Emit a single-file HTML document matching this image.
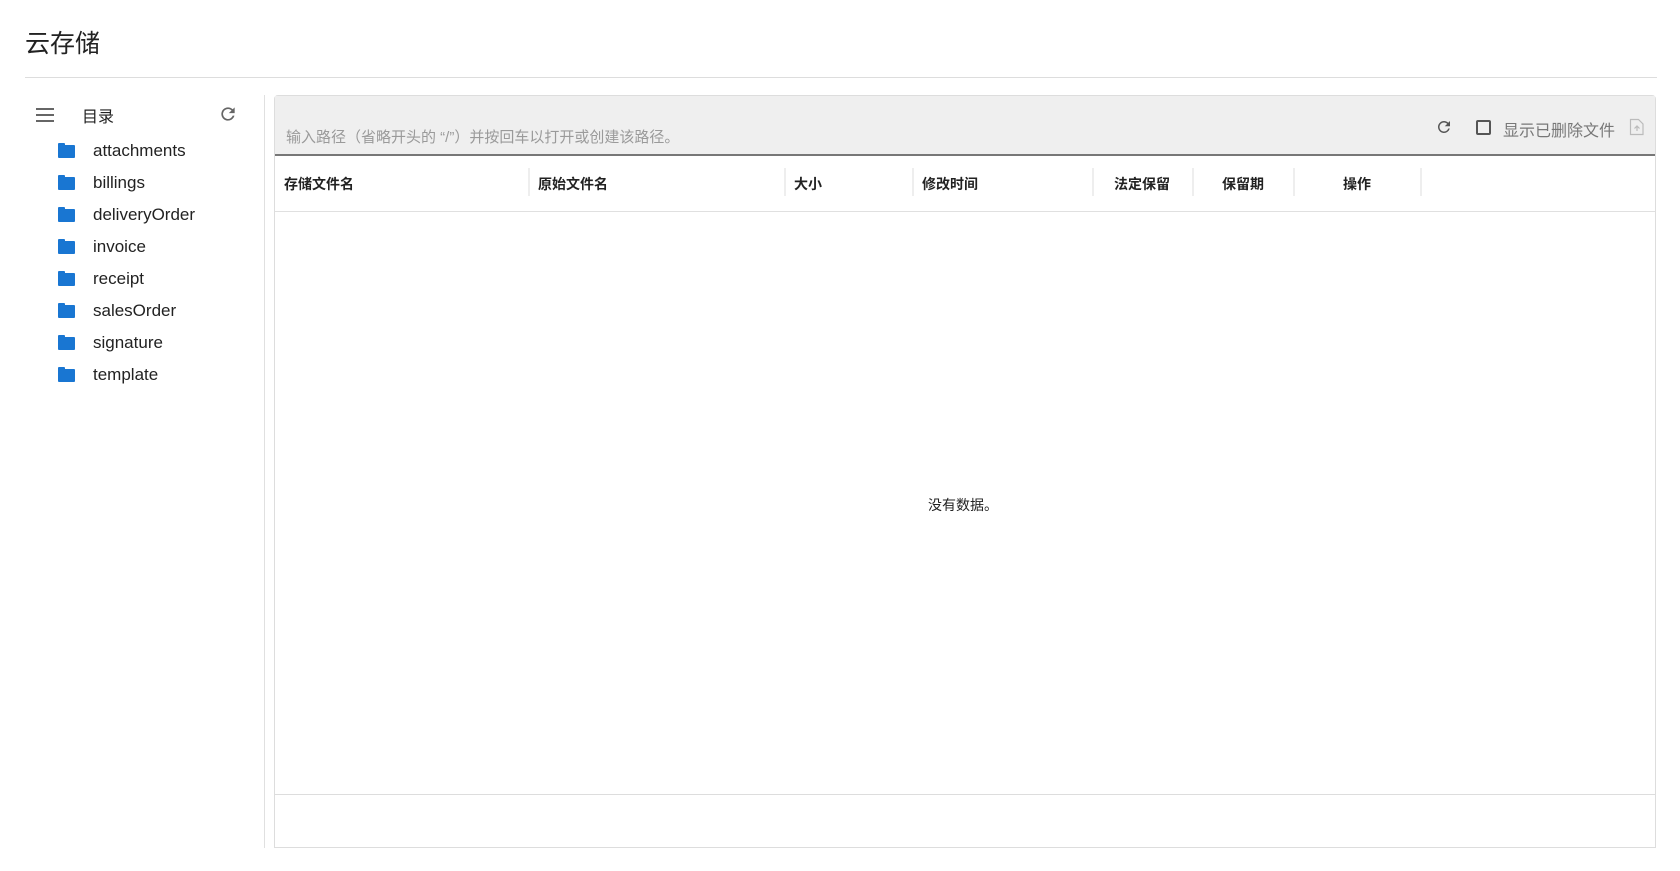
<!DOCTYPE html>
<html><head><meta charset="utf-8"><style>
*{box-sizing:border-box;margin:0;padding:0}
body{width:1680px;height:871px;background:#fff;font-family:"Liberation Sans","Noto Sans CJK SC",sans-serif;color:#222;position:relative;overflow:hidden}
.abs{position:absolute}
.title{left:25px;top:24px;font-size:25px;color:#222}
.hr{left:25px;top:77px;width:1632px;height:1px;background:#ddd}
.vd{left:264px;top:95px;width:1px;height:753px;background:#e0e0e0}
.ham{left:36px;top:108px;width:18px}
.ham i{display:block;height:2px;background:#666;margin-bottom:4px}
.dir{left:82px;top:103px;font-size:16px}
.fold{left:58px;width:17px;height:13px;background:#1976d2;border-radius:1px}
.fold:before{content:"";position:absolute;left:0;top:-2px;width:7px;height:3px;background:#1976d2;border-radius:1px 1px 0 0}
.fn{left:93px;font-size:17px;color:#222}
.panel{left:274px;top:95px;width:1382px;height:753px;border:1px solid #ddd;border-radius:4px 4px 0 0}
.tool{left:275px;top:96px;width:1380px;height:60px;background:#efefef;border-bottom:2px solid #777}
.ph{left:286px;top:126px;font-size:15px;color:#9a9a9a}
.th{top:174px;font-size:14px;font-weight:bold;color:#222}
.sep{top:168px;width:2px;height:28px;background:#eee}
.hline{left:275px;top:211px;width:1380px;height:1px;background:#e0e0e0}
.fline{left:275px;top:794px;width:1380px;height:1px;background:#ddd}
</style></head><body>
<div class="abs title">云存储</div>
<div class="abs hr"></div>
<div class="abs ham"><i></i><i></i><i></i></div>
<div class="abs dir">目录</div>
<svg class="abs" style="left:218px;top:104px" width="20" height="20" viewBox="0 0 24 24"><path d="M17.65 6.35A7.95 7.95 0 0 0 12 4a8 8 0 1 0 7.73 10h-2.08A6 6 0 1 1 12 6c1.66 0 3.14.69 4.22 1.78L13 11h7V4z" fill="#666"/></svg>
<div class="abs vd"></div>

<div class="abs fold" style="top:145px"></div><div class="abs fn" style="top:141px">attachments</div>
<div class="abs fold" style="top:177px"></div><div class="abs fn" style="top:173px">billings</div>
<div class="abs fold" style="top:209px"></div><div class="abs fn" style="top:205px">deliveryOrder</div>
<div class="abs fold" style="top:241px"></div><div class="abs fn" style="top:237px">invoice</div>
<div class="abs fold" style="top:273px"></div><div class="abs fn" style="top:269px">receipt</div>
<div class="abs fold" style="top:305px"></div><div class="abs fn" style="top:301px">salesOrder</div>
<div class="abs fold" style="top:337px"></div><div class="abs fn" style="top:333px">signature</div>
<div class="abs fold" style="top:369px"></div><div class="abs fn" style="top:365px">template</div>

<div class="abs panel"></div>
<div class="abs tool"></div>
<div class="abs ph">输入路径（省略开头的 “/”）并按回车以打开或创建该路径。</div>
<svg class="abs" style="left:1435px;top:118px" width="18" height="18" viewBox="0 0 24 24"><path d="M17.65 6.35A7.95 7.95 0 0 0 12 4a8 8 0 1 0 7.73 10h-2.08A6 6 0 1 1 12 6c1.66 0 3.14.69 4.22 1.78L13 11h7V4z" fill="#555"/></svg>
<div class="abs" style="left:1476px;top:120px;width:15px;height:15px;border:2px solid #555;border-radius:2px"></div>
<div class="abs" style="left:1503px;top:117px;font-size:16px;color:#777">显示已删除文件</div>
<svg class="abs" style="left:1629px;top:118px" width="16" height="18" viewBox="0 0 16 18"><path d="M1.5 1.5h8l4.5 4.5v10.5h-12.5z" fill="none" stroke="#bbb" stroke-width="1.2"/><path d="M8 13V8M5.5 10.5L8 8l2.5 2.5" fill="none" stroke="#bbb" stroke-width="1.2"/></svg>

<div class="abs th" style="left:284px">存储文件名</div>
<div class="abs sep" style="left:528px"></div>
<div class="abs th" style="left:538px">原始文件名</div>
<div class="abs sep" style="left:784px"></div>
<div class="abs th" style="left:794px">大小</div>
<div class="abs sep" style="left:912px"></div>
<div class="abs th" style="left:922px">修改时间</div>
<div class="abs sep" style="left:1092px"></div>
<div class="abs th" style="left:1114px">法定保留</div>
<div class="abs sep" style="left:1192px"></div>
<div class="abs th" style="left:1222px">保留期</div>
<div class="abs sep" style="left:1293px"></div>
<div class="abs th" style="left:1343px">操作</div>
<div class="abs sep" style="left:1420px"></div>
<div class="abs hline"></div>
<div class="abs" style="left:928px;top:495px;font-size:14px;color:#222">没有数据。</div>
<div class="abs fline"></div>
</body></html>
